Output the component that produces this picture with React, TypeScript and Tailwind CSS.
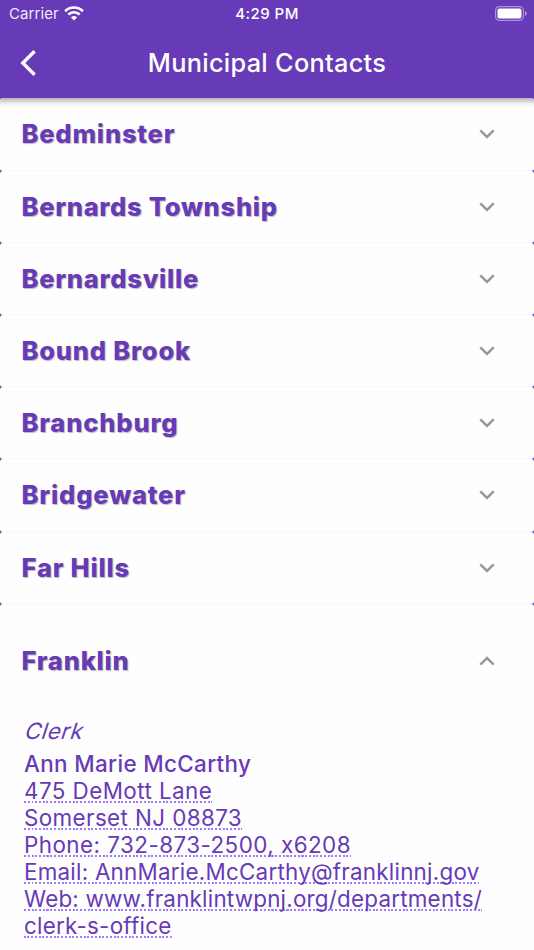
import clsx from "clsx";

interface HeadingProps {
  name: string;
  tracking: string;
  open?: boolean;
}

const towns: HeadingProps[] = [
  { name: "Bedminster", tracking: "tracking-[0.8px]" },
  { name: "Bernards Township", tracking: "tracking-[0.72px]" },
  { name: "Bernardsville", tracking: "tracking-[0.75px]" },
  { name: "Bound Brook", tracking: "tracking-[0.8px]" },
  { name: "Branchburg", tracking: "tracking-[0.85px]" },
  { name: "Bridgewater", tracking: "tracking-[0.85px]" },
  { name: "Far Hills", tracking: "tracking-[0.8px]" },
];

const details = [
  { text: "475 DeMott Lane", tracking: "tracking-[0.44px]" },
  { text: "Somerset NJ 08873", tracking: "tracking-[0.4px]" },
  { text: "Phone: 732-873-2500, x6208", tracking: "tracking-[0.46px]" },
  { text: "Email: AnnMarie.McCarthy@franklinnj.gov", tracking: "tracking-[0.24px]" },
  { text: "Web: www.franklintwpnj.org/departments/", tracking: "tracking-[0.22px]" },
  { text: "clerk-s-office", tracking: "tracking-[0.24px]" },
];

const Chevron = ({ open }: { open?: boolean }) => (
  <svg
    className={clsx("h-[10px] w-4", open && "rotate-180")}
    viewBox="0 0 16 10"
    fill="none"
    stroke="#999"
    strokeWidth="2.5"
  >
    <path d="M1.3 1.3 8 8l6.7-6.7" />
  </svg>
);

const Heading = ({ name, tracking, open }: HeadingProps) => (
  <div className="flex w-full items-center justify-between pr-[39px] pl-[21.5px]">
    <h2
      className={clsx(
        "text-[25.5px] leading-[30px] font-extrabold whitespace-nowrap [text-shadow:1px_1px_1px_#0004]",
        tracking
      )}
    >
      {name}
    </h2>
    <Chevron open={open} />
  </div>
);

const StatusBar = () => (
  <div className="grid h-7 grid-cols-3 items-center pr-[7px] pl-[9px] text-[15px] leading-7">
    <div className="flex items-center gap-[5px]">
      <span className="tracking-[0.1px] opacity-90">Carrier</span>
      <svg className="-mt-[2px] h-[15px] w-5" viewBox="0 0 20 15" fill="none" stroke="white" strokeWidth="2.6">
        <path d="M1.1 5.2a12.7 12.7 0 0 1 17.8 0M4.3 8.5a8.2 8.2 0 0 1 11.4 0" />
        <path d="M10 14.5 6.9 11.4a4.5 4.5 0 0 1 6.2 0Z" fill="white" stroke="none" />
      </svg>
    </div>
    <span className="-ml-[2px] text-center font-medium tracking-[0.45px]">4:29 PM</span>
    <svg className="-mt-[2px] h-[15px] w-8 justify-self-end" viewBox="0 0 32 15" fill="none">
      <rect x=".6" y=".6" width="27.8" height="13.8" rx="3.8" stroke="white" strokeOpacity=".45" strokeWidth="1.2" />
      <rect x="2.5" y="2.5" width="24" height="10" rx="2" fill="white" />
      <path d="M30 5v5c2.2-.7 2.2-4.3 0-5Z" fill="white" fillOpacity=".5" />
    </svg>
  </div>
);

const App = () => {
  return (
    <div className="flex h-[950px] w-[534px] flex-col overflow-hidden bg-[#673ab7] font-['Inter',sans-serif] text-[#673ab7]">
      <header className="h-[98px] shrink-0 bg-[#673ab7] text-white">
        <StatusBar />
        <div className="grid h-[69px] grid-cols-[60px_1fr_60px] items-center">
          <svg className="ml-5 h-[26px] w-[17px]" viewBox="0 0 17 26" fill="none" stroke="white" strokeWidth="3.4">
            <path d="M14.6 1.2 2.8 13l11.8 11.8" />
          </svg>
          <h1 className="text-center text-[25.3px] leading-[30px] font-medium tracking-[0.3px] whitespace-nowrap">
            Municipal Contacts
          </h1>
        </div>
      </header>

      {towns.map((town, i) => (
        <div
          key={town.name}
          className={clsx(
            "flex shrink-0 items-center rounded-[3px] border-b border-[#f7f7f7] bg-[#fefefe] pt-px",
            i === 0
              ? "h-[72.6px] bg-[linear-gradient(#b4b4b4,#d6d6d6_3px,#f2f2f2_6px,#fefefe_10px)]"
              : "h-[72.2px]"
          )}
        >
          <Heading {...town} />
        </div>
      ))}

      <section className="grow rounded-t-[3px] bg-[#fefefe]">
        <div className="flex h-[114px] items-center">
          <Heading name="Franklin" tracking="tracking-[0.8px]" open />
        </div>
        <div className="pl-6 text-[22.4px] leading-[27.1px] whitespace-nowrap">
          <p className="-mt-px mb-[6px] pl-[2px]">
            <span className="inline-block -skew-x-[18deg] tracking-[0.5px]">Clerk</span>
          </p>
          <p className="font-medium tracking-[0.36px]">Ann Marie McCarthy</p>
          {details.map(({ text, tracking }) => (
            <p key={text} className="h-[27.1px]">
              <span
                className={clsx(
                  "inline-block h-[26px] bg-[repeating-linear-gradient(90deg,#7c4dffbb_0_2px,transparent_2px_3.75px)] bg-[length:100%_2px] bg-bottom bg-no-repeat",
                  tracking
                )}
              >
                {text}
              </span>
            </p>
          ))}
        </div>
      </section>
    </div>
  );
};

export default App;
